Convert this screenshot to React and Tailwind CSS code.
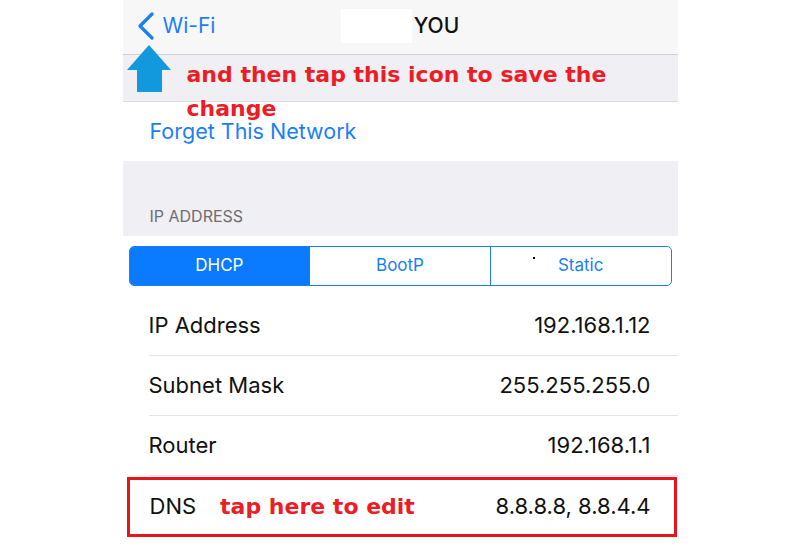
const rows = [
  { label: 'IP Address', value: '192.168.1.12' },
  { label: 'Subnet Mask', value: '255.255.255.0' },
  { label: 'Router', value: '192.168.1.1' },
]

const modes = ['DHCP', 'BootP', 'Static']

function BackChevron() {
  return (
    <svg width="20" height="28" viewBox="0 0 20 28" className="shrink-0">
      <path d="M15 2 L3 14 L15 26" fill="none" stroke="#1a7ff5" strokeWidth="3.2" strokeLinecap="round" strokeLinejoin="round" />
    </svg>
  )
}

function UpArrow() {
  return (
    <svg width="44" height="48" viewBox="0 0 44 48">
      <polygon points="22,0 44,25 35,25 35,47 10,47 10,25 0,25" fill="#1298dc" />
    </svg>
  )
}

export default function App() {
  return (
    <div className="w-[800px] h-[550px] bg-white overflow-hidden" style={{ fontFamily: 'Inter, "Liberation Sans", sans-serif' }}>
      <div className="relative w-[555px] mx-auto">
        {/* nav bar */}
        <div className="h-[55px] bg-[#f7f7f8] border-b border-[#cfcfd3] grid grid-cols-[1fr_auto_1fr] items-center">
          <div className="flex items-center pl-[14px] gap-[6px] text-[#1a7ff5] text-[21px] -mt-[2px]">
            <BackChevron />
            <span>Wi-Fi</span>
          </div>
          <div className="flex items-center -mt-[2px]">
            <div className="w-[71px] h-[34px] bg-white" />
            <span className="ml-[2px] text-[21px] font-medium text-[#111]">YOU</span>
          </div>
          <div />
        </div>

        <div className="h-[47px] bg-[#efeff4] border-b border-[#dcdce0]" />

        <div className="h-[59px] flex items-center pl-[27px] text-[21.5px] text-[#1a7ff5]">
          Forget This Network
        </div>

        <div className="h-[75px] bg-[#efeff4] flex items-end pl-[27px] pb-[8px] text-[16px] text-[#6d6d72]">
          IP ADDRESS
        </div>

        {/* address mode picker */}
        <div className="relative mx-[6px] mt-[10px] h-[40px] flex border border-[#1a7ff5] rounded-[5px] overflow-hidden text-[17px]">
          {modes.map((m, i) => (
            <div
              key={m}
              className={`flex-1 flex items-center justify-center ${i === 0 ? 'bg-[#0a7bff] text-white' : 'text-[#1a7ff5]'} ${i > 0 ? 'border-l border-[#1a7ff5]' : ''}`}
            >
              {m}
            </div>
          ))}
          <div className="absolute left-[403px] top-[10px] w-[2px] h-[2px] bg-black" />
        </div>

        <div className="mt-[10px]">
          {rows.map((r) => (
            <div key={r.label} className="h-[60px] ml-[26px] pr-[27px] flex items-center justify-between border-b border-[#e3e3e6] text-[22px] text-[#111]">
              <span>{r.label}</span>
              <span>{r.value}</span>
            </div>
          ))}
          <div className="relative h-[60px] pl-[27px] pr-[27px] flex items-center text-[22px] text-[#111]">
            <span>DNS</span>
            <span className="ml-[24px] text-[22px] font-bold text-[#ee1c24]" style={{ fontFamily: '"DejaVu Sans", sans-serif' }}>
              tap here to edit
            </span>
            <span className="ml-auto">8.8.8.8, 8.8.4.4</span>
            <div className="absolute left-[4px] right-[1px] top-[1px] bottom-[-1px] border-[3px] border-[#e8141c]" />
          </div>
        </div>

        {/* annotations */}
        <div className="absolute left-[4px] top-[45px]">
          <UpArrow />
        </div>
        <div
          className="absolute left-[64px] top-[58px] text-[22px] leading-[34px] font-bold text-[#ee1c24] whitespace-nowrap"
          style={{ fontFamily: '"DejaVu Sans", sans-serif' }}
        >
          and then tap this icon to save the
          <br />
          change
        </div>
      </div>
    </div>
  )
}
